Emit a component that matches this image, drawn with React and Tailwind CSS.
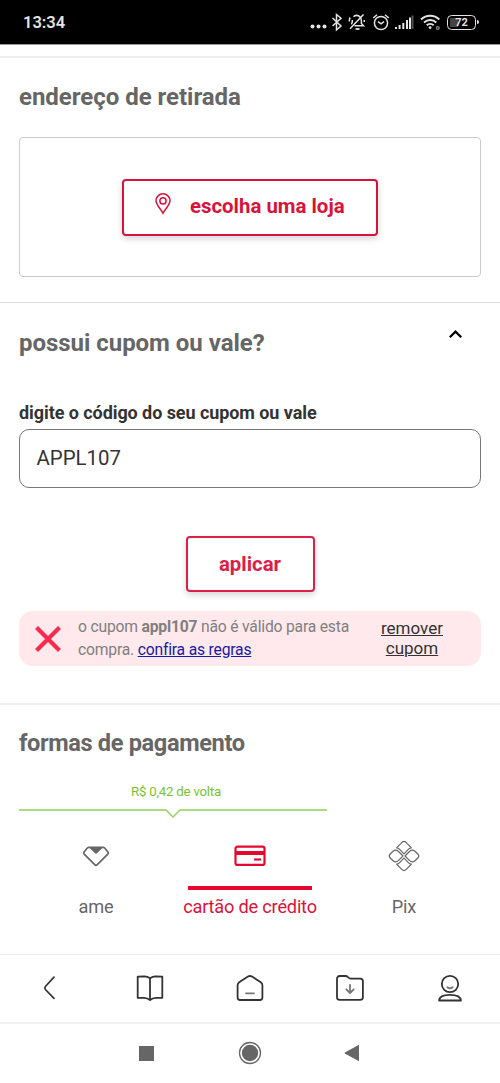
const HEADING = "text-[24px] leading-[28px] font-bold tracking-[-0.03px] text-[#666]";

function StatusBar() {
  return (
    <header className="flex h-11 items-start bg-black pt-3 pr-5 pl-[23px] text-[#e4e4e4]">
      <span className="mt-[1px] text-[16.5px] leading-[20px] font-semibold">13:34</span>

      <div className="ml-auto flex h-5 items-center">
        <svg width="17" height="20" fill="currentColor">
          <circle cx="2.5" cy="14.5" r="2" />
          <circle cx="8.5" cy="14.5" r="2" />
          <circle cx="14.5" cy="14.5" r="2" />
        </svg>
        <svg className="ml-[4px]" width="12" height="20" fill="none" stroke="currentColor" strokeWidth="1.5">
          <path d="M1.5 6 10 14 5.5 17.8V2.5L10 6.3 1.5 14" />
        </svg>
        <svg className="ml-[5px]" width="18" height="20" fill="none" stroke="currentColor" strokeWidth="1.5">
          <path d="M5.500 4.600Q9 2 12 4.900q1.400 1.500 1.400 3.900v2.700l2.100 2.300H6.500M3.300 12.300q1-1 1-3V8" />
          <path d="M15.500 2.500 2 16.800M1.300 9.500Q1 7.500 2.200 5.500M16.300 10V8" />
          <path d="M7.500 17h4" strokeWidth="1.8" />
        </svg>
        <svg className="ml-[6px]" width="18" height="20" fill="none" stroke="currentColor" strokeWidth="1.5">
          <circle cx="9" cy="11" r="6.6" />
          <path d="m6 9.600 3 2.300 3-2.300M1.200 6 5 2.800M16.800 6 13 2.800" />
        </svg>
        <svg className="ml-[4px]" width="20" height="20" stroke="currentColor" strokeWidth="2">
          <path d="M2 17v-2M5.6 17v-4M9.3 17v-6M13 17V8M16 17V5.5" />
          <path d="M18.500 17V3.5" stroke="#555" />
        </svg>
        <svg className="ml-[6px]" width="22" height="20" fill="none" stroke="currentColor" strokeWidth="1.9">
          <path d="M1 7.5c5.2-5 13.2-5 18.3 0M4 10.5c3.6-3.4 8.8-3.4 12.3 0M6.7 13.3c2-1.8 5-1.8 7 0" />
          <circle cx="10.1" cy="15.6" r="1.4" fill="currentColor" stroke="none" />
          <circle cx="17.8" cy="16" r="1.4" stroke="#888" strokeWidth="1.2" />
        </svg>
        <div className="mt-[1px] mr-[1px] mb-[1px] ml-[5px] flex h-[15px] w-[29px] rounded-[4.5px] border-[1.5px] border-[#e4e4e4] p-[2px]">
          <div className="flex flex-1 items-center justify-center rounded-[1px] bg-linear-to-r from-[#444] from-35% to-black to-36% text-[11px] leading-none font-bold">
            72
          </div>
        </div>
        <div className="mr-[1px] h-[4px] w-[2px] rounded-r bg-[#e4e4e4]" />
      </div>
    </header>
  );
}

function PinIcon() {
  return (
    <svg width="16" height="22" viewBox="0 0 16 22" fill="none" stroke="#d9123b" strokeWidth="1.5">
      <path d="M8 20.2C6.2 16.6 1 11.8 1 7.8a7 7 0 0 1 14 0c0 4-5.2 8.8-7 12.4Z" />
      <circle cx="8" cy="7.9" r="3.1" />
    </svg>
  );
}

function AmeIcon() {
  return (
    <svg width="28" height="22" viewBox="0 0 28 22" fill="none" stroke="#666" strokeWidth="1.7" strokeLinejoin="round">
      <path d="M7 2.3h14q1 0 1.700.7l3.200 4q.9 1.200-.1 2.200L15 19.800q-1 .9-2 0L2.200 9.200q-1-1-.1-2.200l3.200-4Q6 2.300 7 2.300Z" />
      <path d="M7 2.400h14L15 8.300q-1 .9-2 0Z" fill="#666" stroke="none" />
    </svg>
  );
}

function CardIcon() {
  return (
    <svg width="32" height="22" viewBox="0 0 32 22" fill="none" stroke="#e5092f" strokeWidth="2.2">
      <rect x="1.500" y="1.700" width="29" height="18.200" rx="2" />
      <path d="M1 8h30" strokeWidth="4" />
      <path d="M20 14.500h7" />
    </svg>
  );
}

function PixIcon() {
  return (
    <svg width="32" height="32" viewBox="0 0 32 32" fill="none" stroke="#666" strokeWidth="1.2" strokeLinejoin="round">
      <path d="M8.600 7.900 13 3.300q3-3.700 6 0l4.400 4.600q-1.700.2-2.800 1.300L16 13.900l-4.600-4.700Q10.300 8.100 8.600 7.900Z" />
      <path d="M8.600 24.100 13 28.700q3 3.700 6 0l4.400-4.600q-1.700-.2-2.800-1.300L16 18.100l-4.600 4.700q-1.100 1.100-2.800 1.300Z" />
      <path d="m15 16-4.700 4.700q-2.500 2.400-5.200.1L2.200 18q-2-2 0-4l2.900-2.800q2.700-2.300 5.200.1Z" />
      <path d="m17 16 4.700 4.700q2.500 2.400 5.200.1l2.900-2.800q2-2 0-4l-2.900-2.800q-2.700-2.300-5.200.1Z" />
    </svg>
  );
}

function Pickup() {
  return (
    <section className="h-[246px] border-t-2 border-[#eee] px-[19px] pt-[25px]">
      <h2 className={HEADING}>endereço de retirada</h2>
      <div className="mt-[26px] flex h-[140px] items-center justify-center rounded-[4px] border border-[#ccc]">
        <button className="flex h-[57px] w-[256px] items-center rounded-[4px] border-2 border-[#d9123b] pl-[31px] text-[20.4px] font-bold text-[#d9123b] shadow-[0_3px_6px_rgba(0,0,0,0.16)]">
          <span className="mb-[6px]"><PinIcon /></span>
          <span className="mb-[1px] ml-[19px]">escolha uma loja</span>
        </button>
      </div>
    </section>
  );
}

function Coupon() {
  return (
    <section className="h-[401px] border-t border-[#ddd] px-[19px] pt-[26px]">
      <div className="flex items-start justify-between">
        <h2 className={HEADING}>possui cupom ou vale?</h2>
        <svg className="mr-[18px]" width="15" height="11" viewBox="0 0 15 11" fill="none" stroke="#000" strokeWidth="2.2">
          <path d="m1.800 8.200 5.700-5.600 5.700 5.600" />
        </svg>
      </div>

      <label className="mt-[45px] block text-[18px] leading-[22px] font-bold tracking-[-0.07px] text-[#333]">
        digite o código do seu cupom ou vale
      </label>
      <div className="mt-[5px] flex h-[59px] items-center rounded-[10px] border border-[#777] px-[16.5px] text-[20.4px] text-[#333]">
        APPL107
      </div>

      <button className="mx-auto mt-[48px] block h-[56px] w-[129px] rounded-[4px] border-2 border-[#dc1f48] text-[20.4px] font-bold text-[#dc1f48] shadow-[0_3px_6px_rgba(0,0,0,0.16)]">
        aplicar
      </button>

      <div className="mt-[19px] flex h-[55px] items-center rounded-[14px] bg-[#ffe9ec] pl-[15px]">
        <svg className="mt-[1px]" width="28" height="28" viewBox="0 0 28 28" stroke="#fb2a4e" strokeWidth="4.2">
          <path d="m2.500 2.500 23 23M25.500 2.500l-23 23" />
        </svg>
        <p className="ml-[16px] w-[280px] text-[15.7px] leading-[22.5px] tracking-[-0.2px] whitespace-nowrap text-[#808080]">
          o cupom <b>appl107</b> não é válido para esta
          <br />
          compra. <a className="text-[#1a1aa6] underline">confira as regras</a>
        </p>
        <a className="mb-[1px] ml-[19px] w-[70px] text-center text-[17px] leading-[20px] text-[#333] underline">
          remover cupom
        </a>
      </div>
    </section>
  );
}

function Payment() {
  return (
    <section className="h-[251px] border-t-2 border-[#eee] px-[19px] pt-[24px]">
      <h2 className="text-[23.6px] leading-[28px] font-bold tracking-[-0.37px] text-[#666]">formas de pagamento</h2>
      <p className="mt-[27px] ml-[2px] w-[310px] text-center text-[13.3px] leading-[16px] tracking-[-0.25px] text-[#7ac231]">R$ 0,42 de volta</p>
      <svg className="mt-[8px]" width="308" height="12" viewBox="0 0 308 12" fill="none" stroke="#93cf5c" strokeWidth="1.3">
        <path d="M0 2h147l7 7 7-7h147" />
      </svg>

      <div className="mt-[18px] grid grid-cols-3 text-center text-[18.2px] leading-[22px] tracking-[-0.2px] whitespace-nowrap text-[#666]">
        <div>
          <div className="flex h-[36px] items-center justify-center"><AmeIcon /></div>
          <p className="mt-[22px]">ame</p>
        </div>
        <div className="text-[#d9123b]">
          <div className="flex h-[36px] items-center justify-center"><CardIcon /></div>
          <div className="mx-auto mt-[12px] h-[4px] w-[124px] bg-[#e5092f]" />
          <p className="mt-[6px]">cartão de crédito</p>
        </div>
        <div>
          <div className="flex h-[36px] items-center justify-center"><PixIcon /></div>
          <p className="mt-[22px]">Pix</p>
        </div>
      </div>
    </section>
  );
}

function BrowserBar() {
  return (
    <nav className="grid h-[68px] grid-cols-5 place-items-center border-t border-[#eee] pb-[2px] text-[#333]">
      <svg width="28" height="28" viewBox="0 0 28 28" fill="none" stroke="currentColor" strokeWidth="1.7" strokeLinecap="round">
        <path d="m18 3.200-8.600 9.300q-1.200 1.500 0 3L18 24.400" />
      </svg>
      <svg width="28" height="28" viewBox="0 0 28 28" fill="none" stroke="currentColor" strokeWidth="1.8" strokeLinejoin="round">
        <path d="M14 4.300q-2.500-1.900-5.500-1.900L1.700 2.600v21.200H8q3.500.1 6 2.200 2.500-2.100 6-2.200h6.300V2.600l-6.800-.2q-3 0-5.500 1.900ZM14 4.300V26" />
      </svg>
      <svg width="28" height="28" viewBox="0 0 28 28" fill="none" stroke="currentColor" strokeWidth="1.8" strokeLinejoin="round" strokeLinecap="round">
        <path d="M3.200 8.200 12 2.600q2-1.200 4 0l8.800 5.600q1.600 1.200 1.600 3v12.300q0 2.500-2.500 2.500H4.100q-2.500 0-2.500-2.500V11.200q0-1.800 1.600-3Z" />
        <path d="M10 19.300h8" stroke="#777" />
      </svg>
      <svg width="28" height="28" viewBox="0 0 28 28" fill="none" stroke="currentColor" strokeWidth="1.8" strokeLinejoin="round" strokeLinecap="round">
        <path d="M1 5q0-3 2.800-3h5.900q1.200 0 2 .8l1.200 1.100q.8.700 2 .7h9.400q2.600 0 2.600 2.700v15.900q0 2.700-2.700 2.700H3.700Q1 25.900 1 23.200Z" />
        <path d="M14 11v7.500M10.300 15.300 14 19l3.700-3.700" stroke="#777" />
      </svg>
      <svg width="28" height="28" viewBox="0 0 28 28" fill="none" stroke="currentColor" strokeWidth="1.8" strokeLinecap="round" strokeLinejoin="round">
        <circle cx="14" cy="10" r="8.200" />
        <path d="M3.100 26.500q.4-5.600 10.900-5.600t10.900 5.600Z" />
        <path d="M11.300 13.300q2.700 2 5.400 0" stroke="#777" />
      </svg>
    </nav>
  );
}

function SystemBar() {
  return (
    <nav className="flex h-[61px] items-center justify-center border-t-2 border-[#f1f1f1] pr-[2px] pb-[1px]">
      <div className="size-[15px] bg-[#666]" />
      <svg className="ml-[84px]" width="24" height="24" viewBox="0 0 24 24" fill="#666">
        <circle cx="12" cy="12" r="10.500" fill="none" stroke="#666" strokeWidth="1.3" />
        <circle cx="12" cy="12" r="8.2" />
      </svg>
      <svg className="ml-[82px]" width="16" height="18" viewBox="0 0 16 18" fill="#666">
        <path d="M15 .8v16.400L.8 9.400V8.600Z" />
      </svg>
    </nav>
  );
}

export default function App() {
  return (
    <div className="flex h-[1083px] w-[500px] flex-col overflow-hidden bg-white font-[Roboto,sans-serif]">
      <StatusBar />
      <main className="flex-1 border-t border-[#999] pt-[11px]">
        <Pickup />
        <Coupon />
        <Payment />
      </main>
      <BrowserBar />
      <SystemBar />
    </div>
  );
}
